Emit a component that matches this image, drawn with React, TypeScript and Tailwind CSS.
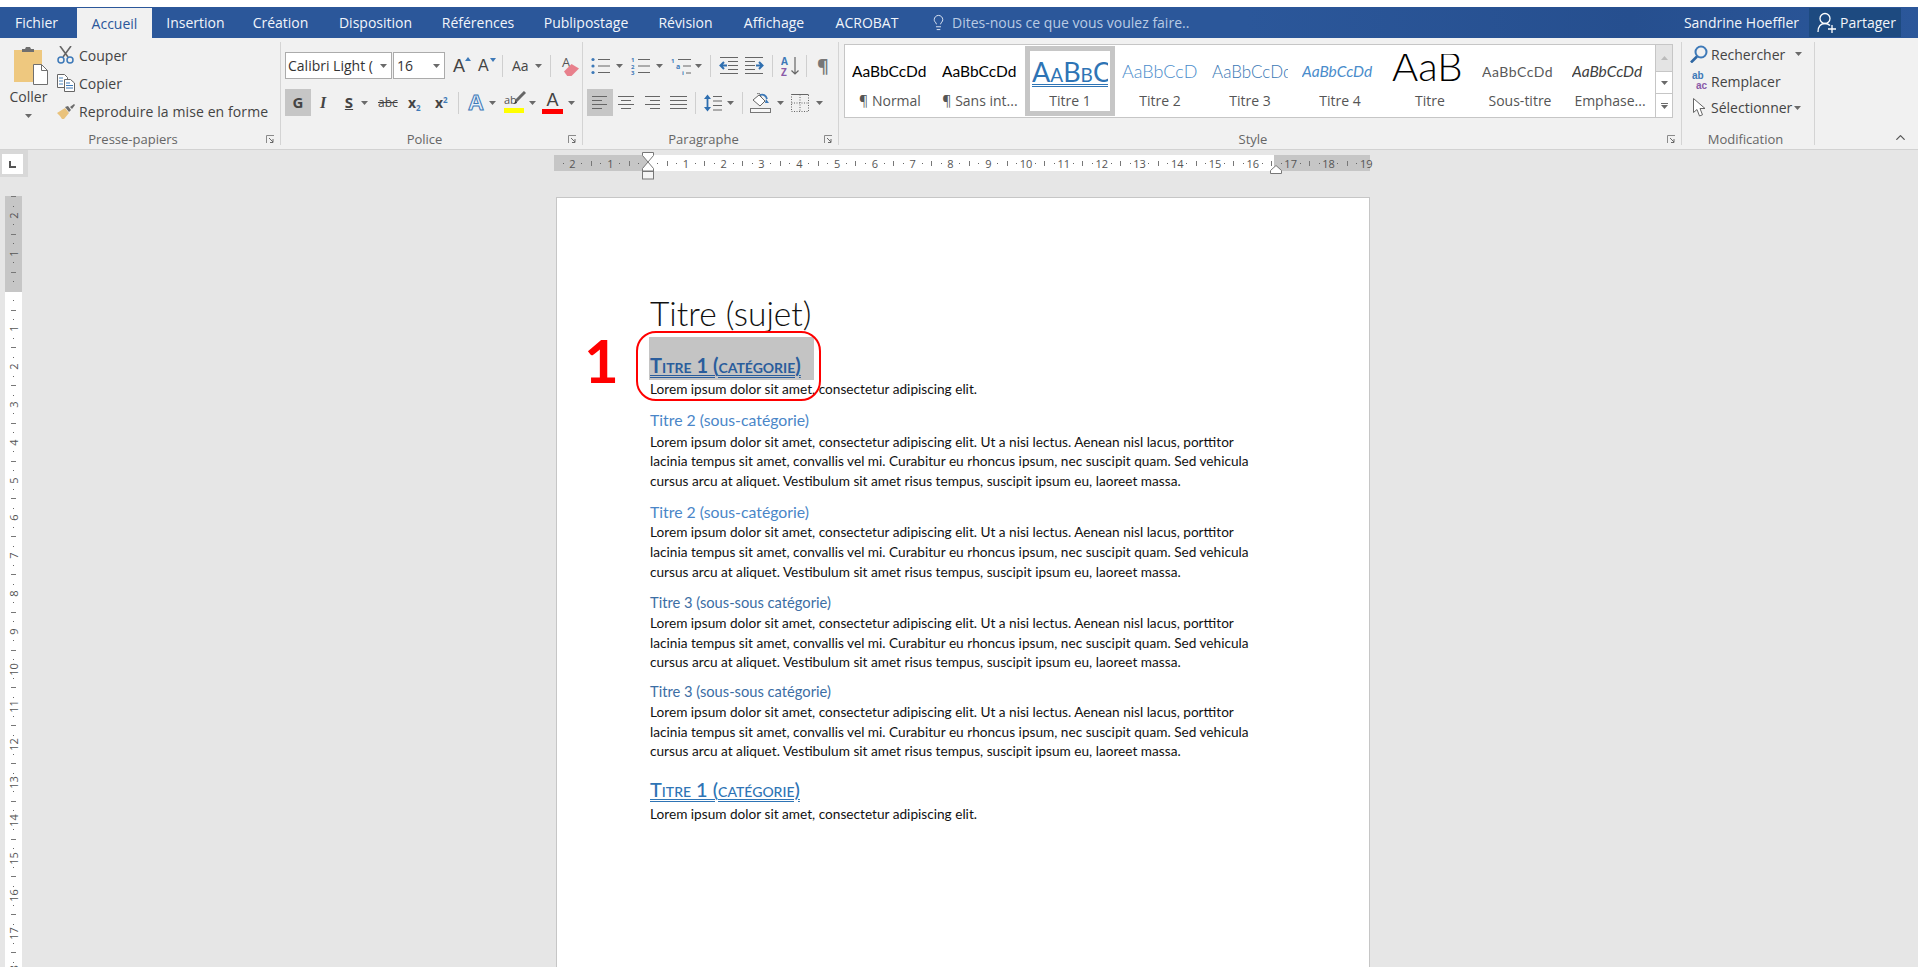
import { Lightbulb, ChevronUp } from "lucide-react";

const tabs = [
  { name: "Fichier", w: "w-[77px] pr-1" },
  { name: "Accueil", w: "w-[75px] bg-[#f1f1f1] text-[#2b579a] mt-px" },
  { name: "Insertion", w: "w-[87px]" },
  { name: "Création", w: "w-[83px]" },
  { name: "Disposition", w: "w-[107px]" },
  { name: "Références", w: "w-[98px]" },
  { name: "Publipostage", w: "w-[118px]" },
  { name: "Révision", w: "w-[81px]" },
  { name: "Affichage", w: "w-[96px]" },
  { name: "ACROBAT", w: "w-[90px]" },
];

const gallery = [
  { label: "¶ Normal", cls: "text-[15.5px] text-black" },
  { label: "¶ Sans int...", cls: "text-[15.5px] text-black" },
  { label: "Titre 1", cls: "text-[27px] leading-[30px] text-[#2e74b5] [font-variant-caps:small-caps] underline decoration-double decoration-1 underline-offset-2", sel: true },
  { label: "Titre 2", cls: "text-[18px] text-[#4a8ccb] font-light" },
  { label: "Titre 3", cls: "text-[17px] text-[#3a78b5] font-light" },
  { label: "Titre 4", cls: "text-[15.5px] text-[#4a8ccb] italic" },
  { label: "Titre", cls: "text-[40px] text-black font-light leading-[36px] mb-[12px]", sample: "AaB" },
  { label: "Sous-titre", cls: "text-[14px] text-[#595959] tracking-[0.5px]" },
  { label: "Emphase...", cls: "text-[15.5px] text-[#404040] italic" },
];

const cmCells = Array.from({ length: 26 }, (_, i) => i - 3);

function Caret({ className = "" }: { className?: string }) {
  return (
    <svg width="7" height="4" viewBox="0 0 7 4" className={"shrink-0 " + className}>
      <path d="M0 0h7L3.5 4z" fill="#6a6a6a" />
    </svg>
  );
}

function Sep({ className = "" }: { className?: string }) {
  return <div className={"w-px h-[22px] bg-[#cfcfcf] shrink-0 " + className} />;
}

function Launcher() {
  return (
    <svg width="9" height="9" viewBox="0 0 9 9">
      <path d="M.5 8V.5H8" fill="none" stroke="#8a8a8a" />
      <path d="M3 3l4 4M7 4v3.5H4" fill="none" stroke="#6a6a6a" />
    </svg>
  );
}

function Group({ w, label, launcher, children }: { w: string; label: string; launcher?: boolean; children: React.ReactNode }) {
  return (
    <div className={"shrink-0 mt-1 h-[103px] border-r border-[#d4d4d4] flex flex-col " + w}>
      <div className="h-[87px] shrink-0">{children}</div>
      <div className="h-5 shrink-0 flex items-center pr-[5px]">
        <div className="flex-1 text-center text-[13px] leading-5 text-[#666]">{label}</div>
        {launcher && <Launcher />}
      </div>
    </div>
  );
}

function PasteIcon() {
  return (
    <svg width="36" height="38" viewBox="0 0 36 38" className="shrink-0">
      <rect x="0" y="3" width="28" height="32" fill="#eec87f" />
      <path d="M8 5V2h3l1-2h4l1 2h3v3z" fill="#6f6f6f" />
      <path d="M19.5 17.5h8l6 6v14h-14z" fill="#fff" stroke="#6f6f6f" />
      <path d="M27.5 17.5v6h6" fill="none" stroke="#6f6f6f" />
    </svg>
  );
}

function ScissorsIcon() {
  return (
    <svg width="17" height="18" viewBox="0 0 17 18">
      <path d="M3 0l8 11M14 0L6 11" stroke="#666" strokeWidth="1.6" fill="none" />
      <circle cx="4" cy="14" r="3" fill="none" stroke="#3d79b8" strokeWidth="1.5" />
      <circle cx="13" cy="14" r="3" fill="none" stroke="#3d79b8" strokeWidth="1.5" />
    </svg>
  );
}

function CopyIcon() {
  return (
    <svg width="18" height="18" viewBox="0 0 18 18">
      <path d="M.5.5h7l3 3v10H.5z" fill="#fff" stroke="#666" />
      <path d="M2 4h4M2 7h4M2 10h4" stroke="#4a86c0" />
      <path d="M7.5 5.5h6l4 3.5v8.5h-10z" fill="#fff" stroke="#666" />
      <path d="M9 9h4M9 11.5h7M9 14h7" stroke="#3d79b8" />
    </svg>
  );
}

function BrushIcon() {
  return (
    <svg width="18" height="15" viewBox="0 0 18 15">
      <path d="M0 9l8-5 4 5-5 6H5L3 12z" fill="#e9c27c" />
      <path d="M8 3l3-1 3 4-2 2z" fill="#6b6b6b" />
      <path d="M13 3l4-3 1 1-3 4z" fill="#6b6b6b" />
    </svg>
  );
}

function FindIcon() {
  return (
    <svg width="18" height="18" viewBox="0 0 18 18">
      <circle cx="11" cy="7" r="5.5" fill="none" stroke="#3d79b8" strokeWidth="2" />
      <path d="M7 11.5L1 17.5" stroke="#2f67a3" strokeWidth="2.6" />
    </svg>
  );
}

function CursorIcon() {
  return (
    <svg width="14" height="19" viewBox="0 0 14 19">
      <path d="M.5.5v14l3.5-3 2.5 6.5 3-1.2L7 10.5h5z" fill="#fff" stroke="#666" />
    </svg>
  );
}

function BulletsIcon() {
  return (
    <svg width="19" height="18" viewBox="0 0 19 18">
      <circle cx="2" cy="2.5" r="1.6" fill="#3d79b8" />
      <circle cx="2" cy="9" r="1.6" fill="#3d79b8" />
      <circle cx="2" cy="15.5" r="1.6" fill="#3d79b8" />
      <path d="M7 2.5h12M7 9h12M7 15.5h12" stroke="#666" />
    </svg>
  );
}

function NumberedIcon() {
  return (
    <svg width="19" height="18" viewBox="0 0 19 18">
      <text x="0" y="5" fontSize="6" fontWeight="700" fill="#3d79b8">1</text>
      <text x="0" y="11.5" fontSize="6" fontWeight="700" fill="#3d79b8">2</text>
      <text x="0" y="18" fontSize="6" fontWeight="700" fill="#3d79b8">3</text>
      <path d="M7 2.5h12M7 9h12M7 15.5h12" stroke="#666" />
    </svg>
  );
}

function MultilevelIcon() {
  return (
    <svg width="22" height="18" viewBox="0 0 22 18">
      <text x="0" y="6" fontSize="6" fontWeight="700" fill="#3d79b8">1</text>
      <text x="5" y="12" fontSize="7" fontWeight="700" fill="#3d79b8">a</text>
      <text x="11" y="18" fontSize="6" fontWeight="700" fill="#3d79b8">i</text>
      <path d="M7 2.5h13M12 9h8M15 16h5" stroke="#666" />
    </svg>
  );
}

function IndentIcon({ flip }: { flip?: boolean }) {
  return (
    <svg width="19" height="17" viewBox="0 0 19 17" className={flip ? "-scale-x-100" : ""}>
      <path d="M1 .5h18M9 4.5h10M9 8.5h10M9 12.5h10M1 16.5h18" stroke="#666" />
      <path d="M8 8.5H2M5 5L1.5 8.5 5 12" fill="none" stroke="#2f6fb0" strokeWidth="2" />
    </svg>
  );
}

function SortIcon() {
  return (
    <svg width="18" height="20" viewBox="0 0 18 20">
      <text x="0" y="9" fontSize="10" fontWeight="700" fill="#3d79b8">A</text>
      <text x="0" y="19.5" fontSize="10" fontWeight="700" fill="#8a5aa8">Z</text>
      <path d="M14 1v17M10.5 14.5L14 18l3.5-3.5" fill="none" stroke="#666" strokeWidth="1.2" />
    </svg>
  );
}

function AlignIcon({ kind }: { kind: "left" | "center" | "right" | "justify" }) {
  const paths = {
    left: "M0 .5h15M0 4.5h10M0 8.5h15M0 12.5h10",
    center: "M0 .5h16M3 4.5h10M0 8.5h16M3 12.5h10",
    right: "M0 .5h15M5 4.5h10M0 8.5h15M5 12.5h10",
    justify: "M0 .5h17M0 4.5h17M0 8.5h17M0 12.5h17",
  };
  return (
    <svg width={kind === "justify" ? 17 : 16} height="13" viewBox={"0 0 " + (kind === "justify" ? 17 : 16) + " 13"}>
      <path d={paths[kind]} stroke="#666" />
    </svg>
  );
}

function SpacingIcon() {
  return (
    <svg width="18" height="18" viewBox="0 0 18 18">
      <path d="M3.5 3v12" stroke="#2f6fb0" strokeWidth="1.8" />
      <path d="M0 5l3.5-4.500L7 5zM0 13l3.5 4.500L7 13z" fill="#2f6fb0" />
      <path d="M9 2.500h9M9 7h9M9 11.500h9M9 16h9" stroke="#666" />
    </svg>
  );
}

function ShadingIcon() {
  return (
    <svg width="21" height="20" viewBox="0 0 21 20">
      <path d="M3 7l6-5 6 6-5 5z" fill="#fff" stroke="#666" />
      <path d="M7 1c1-1 2-1 3 0l1 3" fill="none" stroke="#666" />
      <path d="M10 2c3-1 6 0 7 4" fill="none" stroke="#3d79b8" strokeWidth="1.8" />
      <path d="M16 6l3 4-4 0z" fill="#3d79b8" />
      <rect x=".5" y="15.5" width="20" height="4" fill="#f7f7f7" stroke="#777" />
    </svg>
  );
}

function BordersIcon() {
  return (
    <svg width="18" height="18" viewBox="0 0 18 18">
      <path d="M.5.5h17v17H.5zM9 .5v17M.5 9h17" fill="none" stroke="#666" strokeDasharray="1 1.5" />
      <path d="M.5.5h17" stroke="#666" />
    </svg>
  );
}

function ShareIcon() {
  return (
    <svg width="20" height="22" viewBox="0 0 20 22">
      <circle cx="8" cy="6.5" r="5" fill="none" stroke="#fff" strokeWidth="1.3" />
      <path d="M1 20c0-6 3-8.5 7-8.5 2 0 3.5.5 5 2" fill="none" stroke="#fff" strokeWidth="1.3" />
      <path d="M15 13v8M11 17h8" stroke="#fff" strokeWidth="1.3" />
    </svg>
  );
}

function LetterA({ bar }: { bar: string }) {
  return (
    <div className="w-[21px] flex flex-col items-center">
      <span className="text-[18px] leading-[16px] text-[#444] font-['Liberation_Sans',sans-serif]">A</span>
      <div className={"w-[21px] h-[5px] mt-[1px] " + bar} />
    </div>
  );
}

function RulerCell({ n, vertical }: { n: number; vertical?: boolean }) {
  const label = n === 0 || n === -3 ? "" : String(Math.abs(n));
  if (vertical) {
    return (
      <div className="h-[37.8px] w-[17px] shrink-0 grid grid-rows-4 justify-items-center items-center">
        <span className="-rotate-90 text-[11px] leading-none text-[#555] whitespace-nowrap">{label}</span>
        <i className="w-px h-px bg-[#666]" />
        <i className="w-[5px] h-px bg-[#777]" />
        <i className="w-px h-px bg-[#666]" />
      </div>
    );
  }
  return (
    <div className="w-[37.8px] h-4 shrink-0 grid grid-cols-4 justify-items-center items-center">
      <span className="text-[11px] leading-none text-[#555] whitespace-nowrap">{label}</span>
      <i className="w-px h-px bg-[#666]" />
      <i className="w-px h-[5px] bg-[#777]" />
      <i className="w-px h-px bg-[#666]" />
    </div>
  );
}

function Body({ lines }: { lines: string[] }) {
  return (
    <div className="text-[13.65px] leading-[19.6px] text-[#111] font-['Lato',sans-serif]">
      {lines.map((l) => (
        <div key={l} className="whitespace-nowrap">{l}</div>
      ))}
    </div>
  );
}

const lorem = [
  "Lorem ipsum dolor sit amet, consectetur adipiscing elit. Ut a nisi lectus. Aenean nisl lacus, porttitor",
  "lacinia tempus sit amet, convallis vel mi. Curabitur eu rhoncus ipsum, nec suscipit quam. Sed vehicula",
  "cursus arcu at aliquet. Vestibulum sit amet risus tempus, suscipit ipsum eu, laoreet massa.",
];
const shortLorem = ["Lorem ipsum dolor sit amet, consectetur adipiscing elit."];

export default function App() {
  return (
    <div className="w-[1918px] h-[974px] overflow-hidden bg-white flex flex-col font-['Open_Sans',sans-serif]">
      <div className="h-[7px] shrink-0" />

      {/* barre des onglets */}
      <div className="h-[31px] shrink-0 bg-[linear-gradient(90deg,#2b579a_65%,#264f8f_85%,#2b579a_100%)] flex text-[14px] text-[#f2f5fa]">
        {tabs.map((t) => (
          <div key={t.name} className={"flex items-center justify-center shrink-0 " + t.w}>
            {t.name}
          </div>
        ))}
        <div className="ml-[18px] flex items-center text-[#b9cbe4]">
          <Lightbulb size={17} strokeWidth={1.3} className="text-[#e6edf7]" />
          <span className="ml-[5px]">Dites-nous ce que vous voulez faire..</span>
        </div>
        <div className="ml-auto flex items-center">
          <span className="mr-[10px]">Sandrine Hoeffler</span>
          <div className="w-[92px] h-[29px] bg-[#1d4a80] flex items-center pl-2 gap-[3px] mr-[17px]">
            <ShareIcon />
            <span>Partager</span>
          </div>
        </div>
      </div>

      {/* ruban */}
      <div className="h-[112px] shrink-0 bg-[#f1f1f1] border-b border-[#d2d2d2] flex text-[14px] text-[#444]">
        <Group w="w-[281px]" label="Presse-papiers" launcher>
          <div className="flex h-full">
            <div className="w-[57px] shrink-0 flex flex-col items-center">
              <div className="mt-[5px] ml-[6px]"><PasteIcon /></div>
              <span className="leading-[20px] mt-[2px]">Coller</span>
              <Caret className="mt-[7px]" />
            </div>
            <div className="flex flex-col pt-[4px]">
              <div className="flex items-center h-[18px] gap-[5px]"><ScissorsIcon /><span>Couper</span></div>
              <div className="flex items-center h-[18px] mt-[10px] gap-[4px]"><CopyIcon /><span>Copier</span></div>
              <div className="flex items-center h-[15px] mt-[12px] gap-[4px]"><BrushIcon /><span className="whitespace-nowrap tracking-[0.1px]">Reproduire la mise en forme</span></div>
            </div>
          </div>
        </Group>

        <Group w="w-[302px]" label="Police" launcher>
          <div className="pl-1 pt-[10px]">
            <div className="flex items-center h-[27px]">
              <div className="w-[107px] h-[27px] bg-white border border-[#ababab] flex items-center pl-[2px] pr-1 justify-between">
                <span className="whitespace-nowrap overflow-hidden w-[90px] text-[#333]">Calibri Light (</span>
                <Caret />
              </div>
              <div className="w-[52px] h-[27px] ml-px bg-white border border-[#ababab] flex items-center pl-[3px] pr-1 justify-between">
                <span className="text-[#333]">16</span>
                <Caret />
              </div>
              <div className="ml-2 w-[15px] relative text-[18px] leading-none font-['Liberation_Sans',sans-serif]">
                A
                <svg width="6" height="4" viewBox="0 0 6 4" className="absolute -right-[3px] top-0"><path d="M0 4l3-4 3 4z" fill="#3d79b8" /></svg>
              </div>
              <div className="ml-[10px] w-[14px] relative text-[16px] leading-none font-['Liberation_Sans',sans-serif]">
                A
                <svg width="6" height="4" viewBox="0 0 6 4" className="absolute -right-1 top-0"><path d="M0 0h6L3 4z" fill="#3d79b8" /></svg>
              </div>
              <Sep className="ml-[10px]" />
              <span className="ml-[9px] w-[22px] text-[14px]">Aa</span>
              <Caret className="ml-[1px]" />
              <Sep className="ml-[8px]" />
              <div className="ml-[11px] relative w-[16px] h-[20px]">
                <span className="absolute left-0 -top-[3px] text-[13px] text-[#555]">A</span>
                <svg width="15" height="12" viewBox="0 0 14 11" className="absolute left-[2px] top-[8px]"><path d="M0 7l7-7 7 4-7 7H3z" fill="#e8808c" /></svg>
              </div>
            </div>
            <div className="flex items-center h-[27px] mt-[10px] text-[#444]">
              <div className="w-[26px] h-[27px] bg-[#c6c6c6] flex items-center justify-center font-bold text-[15px]">G</div>
              <div className="ml-[6px] w-[12px] text-center italic font-bold text-[16px] font-['Liberation_Serif',serif]">I</div>
              <div className="ml-[14px] w-[12px] text-center font-bold underline text-[15px]">S</div>
              <Caret className="ml-[6px]" />
              <span className="ml-[10px] w-[20px] line-through text-[12px] leading-none">abc</span>
              <span className="ml-[10px] w-[15px] font-bold text-[14px] leading-none whitespace-nowrap">x<sub className="text-[8px] text-[#3d79b8] -bottom-[3px]">2</sub></span>
              <span className="ml-[12px] w-[16px] font-bold text-[14px] leading-none whitespace-nowrap">x<sup className="text-[8px] text-[#3d79b8] -top-[5px]">2</sup></span>
              <Sep className="ml-[7px]" />
              <span className="ml-[9px] w-[16px] text-[22px] leading-none font-bold text-[#e8f1fa] [-webkit-text-stroke:1px_#3d79b8] font-['Liberation_Sans',sans-serif]">A</span>
              <Caret className="ml-[5px]" />
              <div className="ml-[8px] w-[20px] flex flex-col items-center relative">
                <span className="text-[11px] leading-[15px] text-[#555] self-start">ab</span>
                <svg width="14" height="14" viewBox="0 0 14 14" className="absolute left-[8px] -top-[1px]"><path d="M13 1L4 10" stroke="#666" strokeWidth="3" /><path d="M4 9l-2 4 3-1z" fill="#333" /></svg>
                <div className="w-[20px] h-[5px] bg-[#ffff00] mt-[1px]" />
              </div>
              <Caret className="ml-[5px]" />
              <div className="ml-[6px]"><LetterA bar="bg-[#ff0000]" /></div>
              <Caret className="ml-[5px]" />
            </div>
          </div>
        </Group>

        <Group w="w-[256px]" label="Paragraphe" launcher>
          <div className="pl-1 pt-[10px]">
            <div className="flex items-center h-[27px]">
              <div className="ml-1"><BulletsIcon /></div>
              <Caret className="ml-[6px]" />
              <div className="ml-[8px]"><NumberedIcon /></div>
              <Caret className="ml-[6px]" />
              <div className="ml-[8px]"><MultilevelIcon /></div>
              <Caret className="ml-[2px]" />
              <Sep className="ml-[8px]" />
              <div className="ml-[8px]"><IndentIcon /></div>
              <div className="ml-[7px]"><IndentIcon flip /></div>
              <Sep className="ml-[8px]" />
              <div className="ml-[8px]"><SortIcon /></div>
              <Sep className="ml-[7px]" />
              <span className="ml-[10px] text-[18px] font-bold text-[#777] leading-none">¶</span>
            </div>
            <div className="flex items-center h-[27px] mt-[10px]">
              <div className="w-[26px] h-[27px] bg-[#c6c6c6] flex items-center justify-center"><AlignIcon kind="left" /></div>
              <div className="ml-[5px]"><AlignIcon kind="center" /></div>
              <div className="ml-[11px]"><AlignIcon kind="right" /></div>
              <div className="ml-[9px]"><AlignIcon kind="justify" /></div>
              <Sep className="ml-[8px]" />
              <div className="ml-[8px]"><SpacingIcon /></div>
              <Caret className="ml-[5px]" />
              <Sep className="ml-[8px]" />
              <div className="ml-[7px]"><ShadingIcon /></div>
              <Caret className="ml-[6px]" />
              <div className="ml-[7px]"><BordersIcon /></div>
              <Caret className="ml-[7px]" />
            </div>
          </div>
        </Group>

        <Group w="w-[843px]" label="Style" launcher>
          <div className="flex ml-[5px] mt-[2px] h-[74px]">
            <div className="w-[812px] h-[74px] bg-white border border-[#c6c6c6] flex items-center font-['Lato',sans-serif]">
              {gallery.map((g) => (
                <div key={g.label} className={"w-[90px] h-[70px] shrink-0 border-[5px] flex flex-col items-center " + (g.sel ? "border-[#c6c6c6]" : "border-transparent")}>
                  <div className="w-[76px] h-[36px] mt-[3px] overflow-hidden flex items-center justify-start">
                    <span className={"whitespace-nowrap " + g.cls}>{g.sample ?? "AaBbCcDd"}</span>
                  </div>
                  <div className="mt-[2px] leading-5 text-[14px] text-[#555] font-['Open_Sans',sans-serif] whitespace-nowrap">{g.label}</div>
                </div>
              ))}
            </div>
            <div className="w-[17px] h-[74px] flex flex-col border-y border-r border-[#c6c6c6] bg-white">
              <div className="h-[26px] bg-[#e4e4e4] flex items-center justify-center">
                <svg width="7" height="4" viewBox="0 0 7 4"><path d="M0 4h7L3.5 0z" fill="#bbb" /></svg>
              </div>
              <div className="h-[23px] border-y border-[#c6c6c6] flex items-center justify-center"><Caret /></div>
              <div className="flex-1 flex flex-col items-center justify-center gap-[1px]">
                <div className="w-[7px] h-px bg-[#6a6a6a]" />
                <Caret />
              </div>
            </div>
          </div>
        </Group>

        <Group w="w-[133px]" label="Modification">
          <div className="flex flex-col pl-2 pt-[3px]">
            <div className="flex items-center h-[18px]">
              <FindIcon />
              <span className="ml-[3px]">Rechercher</span>
              <Caret className="ml-[10px]" />
            </div>
            <div className="flex items-center h-[24px] mt-[6px]">
              <div className="w-[21px] text-[10px] leading-[10px] font-bold font-['Liberation_Sans',sans-serif]">
                <div className="text-[#3d79b8] pl-[2px]">ab</div>
                <div className="text-[#8a5aa8] pl-[6px]">ac</div>
              </div>
              <span>Remplacer</span>
            </div>
            <div className="flex items-center h-[19px] mt-[5px]">
              <div className="ml-[3px] w-[18px]"><CursorIcon /></div>
              <span>Sélectionner</span>
              <Caret className="ml-[2px]" />
            </div>
          </div>
        </Group>

        <div className="flex-1 flex items-end justify-end pb-[4px] pr-[10px]">
          <ChevronUp size={15} className="text-[#555]" />
        </div>
      </div>

      {/* zone du document */}
      <div className="flex-1 min-h-0 flex bg-[#e6e6e6]">
        <div className="w-[554px] shrink-0 flex flex-col">
          <div className="w-[28px] h-[27px] bg-[#d8d8d8] flex items-center justify-center pr-1">
            <div className="w-[21px] h-[20px] bg-white flex items-center justify-center">
              <div className="w-[7px] h-[7px] mt-[2px] border-l-2 border-b-2 border-[#555]" />
            </div>
          </div>
          <div className="ml-[5px] mt-[19px] w-[17px] flex-1 min-h-0 overflow-hidden relative bg-white">
            <div className="absolute inset-x-0 top-0 h-[96px] bg-[#c6c6c6]" />
            <div className="relative -mt-[23px]">
              {cmCells.map((n) => <RulerCell key={n} n={n} vertical />)}
            </div>
          </div>
        </div>

        <div className="w-[816px] shrink-0 flex flex-col">
          <div className="mt-[5px] h-4 relative flex">
            <div className="w-[94px] bg-[#c6c6c6]" />
            <div className="w-[626px] bg-white" />
            <div className="w-[96px] bg-[#c6c6c6]" />
            <div className="absolute inset-y-0 left-0 -right-[5px] overflow-hidden flex">
              <div className="flex -ml-[24px]">
                {cmCells.map((n) => <RulerCell key={n} n={n} />)}
              </div>
            </div>
            <svg width="12" height="28" viewBox="0 0 12 28" className="absolute left-[88px] -top-[3px]">
              <path d="M.5.5h11v3L6 10 .5 3.5zM6 10l5.5 6.5V19H.5v-2.5z" fill="#fff" stroke="#777" />
              <rect x=".5" y="19.5" width="11" height="7.5" fill="#f4f4f4" stroke="#777" />
            </svg>
            <svg width="12" height="9" viewBox="0 0 12 9" className="absolute left-[716px] top-[10px]">
              <path d="M.5 8.5v-3L6 .5l5.5 5v3z" fill="#fff" stroke="#777" />
            </svg>
          </div>

          <div className="relative ml-[2px] mt-[26px] flex-1 min-h-0 bg-white border-x border-t border-[#c6c6c6] pl-[93px] pt-[95px] overflow-hidden font-['Lato',sans-serif]">
            <div className="h-[44px] leading-[41px] text-[33.5px] font-light text-[#111] whitespace-nowrap">Titre (sujet)</div>
            <div className="w-[165px] h-[43px] -ml-px pl-px bg-[#c4c4c4] flex items-end pb-[3px]">
              <span className="text-[20px] leading-[24px] font-bold text-[#2a5d9c] whitespace-nowrap [font-variant-caps:small-caps] underline decoration-double decoration-1 underline-offset-2">Titre 1 (catégorie)</span>
            </div>
            <Body lines={shortLorem} />

            <div className="mt-[9px] h-[24px] leading-[22px] text-[15.8px] text-[#4a86c8]">Titre 2 (sous-catégorie)</div>
            <Body lines={lorem} />
            <div className="mt-[10px] h-[22px] leading-[22px] text-[15.8px] text-[#4a86c8]">Titre 2 (sous-catégorie)</div>
            <Body lines={lorem} />
            <div className="mt-[9px] h-[23px] leading-[22px] text-[14.7px] text-[#3c6ea5]">Titre 3 (sous-sous catégorie)</div>
            <Body lines={lorem} />
            <div className="mt-[7px] h-[23px] leading-[22px] text-[14.7px] text-[#3c6ea5]">Titre 3 (sous-sous catégorie)</div>
            <Body lines={lorem} />

            <div className="mt-[14px] h-[29px] leading-[26px] text-[20px] font-medium text-[#2e74b5] whitespace-nowrap [font-variant-caps:small-caps] underline decoration-double decoration-1 underline-offset-2">Titre 1 (catégorie)</div>
            <Body lines={shortLorem} />

            {/* annotation par-dessus la page */}
            <div className="absolute left-[79px] top-[133px] w-[185px] h-[70px] rounded-[20px] border-[2.5px] border-[#ff0000]" />
            <div className="absolute left-[27px] top-[127px] text-[60px] leading-[70px] font-bold text-[#ff0000] font-['Lato',sans-serif]">1</div>
          </div>
        </div>

        <div className="flex-1" />
      </div>
      <div className="h-[7px] shrink-0 bg-white" />
    </div>
  );
}
